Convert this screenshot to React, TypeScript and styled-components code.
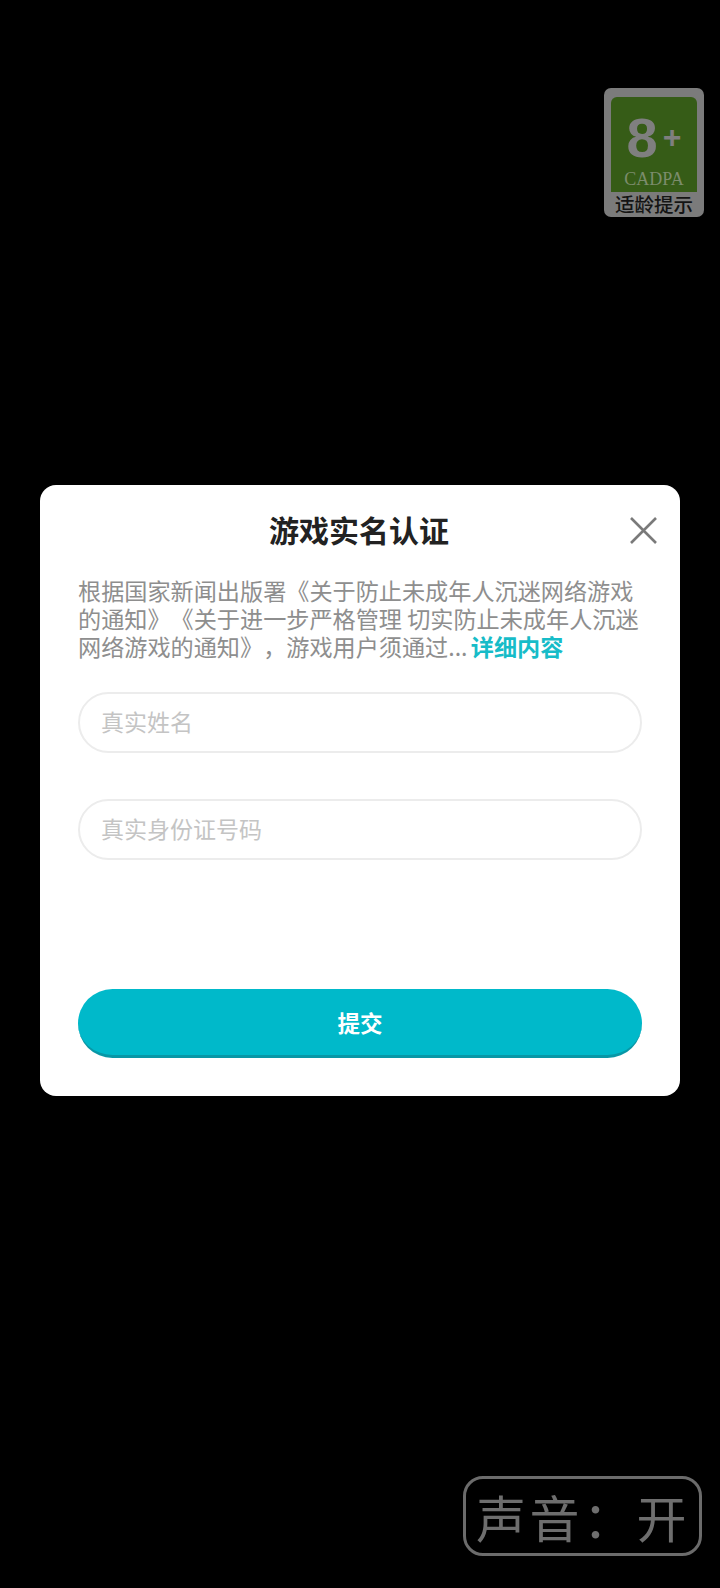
import React from 'react'
import styled, { createGlobalStyle } from 'styled-components'

const GlobalStyle = createGlobalStyle`
  html, body {
    margin: 0;
    padding: 0;
    background: #000;
  }
  * {
    box-sizing: border-box;
  }
`

const cjk = `"Noto Sans CJK SC", "Noto Sans", sans-serif`

const Page = styled.div`
  width: 720px;
  height: 1588px;
  overflow: hidden;
  background: #000;
  display: flex;
  flex-direction: column;
  font-family: ${cjk};
`

const AgeBadge = styled.div`
  align-self: flex-end;
  width: 100px;
  height: 129px;
  margin: 88px 16px 0 0;
  padding: 9px 7px 0;
  border-radius: 7px;
  background: #7b7b7b;
  display: flex;
  flex-direction: column;
  align-items: stretch;
`

const AgePlate = styled.div`
  height: 95px;
  border-radius: 6px 6px 0 0;
  background: #365c17;
  display: flex;
  flex-direction: column;
  align-items: center;
  color: #7f7f7f;
`

const AgeNumber = styled.div`
  height: 72px;
  padding: 16px 0 0 0;
  display: flex;
  align-items: flex-start;
  font-family: "Liberation Sans", sans-serif;
  font-weight: 700;
  line-height: 1;
`

const AgeDigit = styled.span`
  font-size: 56px;
  line-height: 50px;
`

const AgePlus = styled.span`
  font-size: 32px;
  line-height: 32px;
  margin: 8px 0 0 5px;
`

const AgeOrg = styled.div`
  font-family: "Liberation Serif", serif;
  font-size: 18px;
  line-height: 20px;
  color: #7c8c6c;
`

const AgeLabel = styled.div`
  font-size: 19.5px;
  line-height: 24px;
  font-weight: 500;
  text-align: center;
  white-space: nowrap;
  color: #141414;
`

const Dialog = styled.div`
  width: 640px;
  height: 611px;
  margin: 268px 0 0 40px;
  padding: 0 38px;
  border-radius: 16px;
  background: #fff;
  display: flex;
  flex-direction: column;
  position: relative;
`

const Title = styled.h1`
  margin: 22px 2px 0 0;
  font-size: 30px;
  line-height: 44px;
  font-weight: 700;
  color: #222;
  text-align: center;
`

const CloseButton = styled.button`
  position: absolute;
  top: 32px;
  right: 23px;
  width: 27px;
  height: 27px;
  padding: 0;
  border: none;
  background: none;
  display: block;
`

const Notice = styled.p`
  margin: 25px -8px 0 0;
  font-size: 23.15px;
  line-height: 28px;
  color: #8e8e8e;
  white-space: nowrap;
  text-spacing-trim: space-all;
`

const DetailLink = styled.span`
  margin-left: -2px;
  color: #17bcc8;
  font-weight: 700;
`

const Field = styled.div<{ $gap: number }>`
  height: 61px;
  margin-top: ${p => p.$gap}px;
  padding: 0 0 4px 21px;
  border: 2px solid #ececec;
  border-radius: 31px;
  display: flex;
  align-items: center;
  font-size: 23px;
  color: #c4c4c4;
`

const SubmitButton = styled.button`
  height: 69px;
  margin-top: 129px;
  padding: 0;
  border: none;
  border-bottom: 3px solid #0897a6;
  border-radius: 35px;
  background: #00b9ca;
  color: #fff;
  font-family: ${cjk};
  font-size: 22.5px;
  font-weight: 700;
  display: block;
  width: 100%;
`

const SoundToggle = styled.div`
  align-self: flex-end;
  width: 239px;
  height: 80px;
  margin: 380px 18px 0 0;
  padding: 0 0 0 10px;
  border: 3px solid #6b6b6b;
  border-radius: 20px;
  display: flex;
  align-items: center;
  font-size: 50px;
  letter-spacing: 3.5px;
  font-weight: 400;
  line-height: 1;
  color: #6e6e6e;
  white-space: nowrap;
`

const CloseIcon = () => (
  <svg width="27" height="27" viewBox="0 0 27 27" fill="none" stroke="#7a7a7a" strokeWidth="2.6">
    <path d="M1 1 L26 26 M26 1 L1 26" />
  </svg>
)

const App = () => {
  return (
    <Page>
      <GlobalStyle />
      <AgeBadge>
        <AgePlate>
          <AgeNumber>
            <AgeDigit>8</AgeDigit>
            <AgePlus>+</AgePlus>
          </AgeNumber>
          <AgeOrg>CADPA</AgeOrg>
        </AgePlate>
        <AgeLabel>适龄提示</AgeLabel>
      </AgeBadge>
      <Dialog>
        <Title>游戏实名认证</Title>
        <CloseButton>
          <CloseIcon />
        </CloseButton>
        <Notice>
          根据国家新闻出版署《关于防止未成年人沉迷网络游戏
          <br />
          的通知》《关于进一步严格管理 切实防止未成年人沉迷
          <br />
          网络游戏的通知》，游戏用户须通过... <DetailLink>详细内容</DetailLink>
        </Notice>
        <Field $gap={32}>真实姓名</Field>
        <Field $gap={46}>真实身份证号码</Field>
        <SubmitButton>提交</SubmitButton>
      </Dialog>
      <SoundToggle>声音：开</SoundToggle>
    </Page>
  )
}

export default App
